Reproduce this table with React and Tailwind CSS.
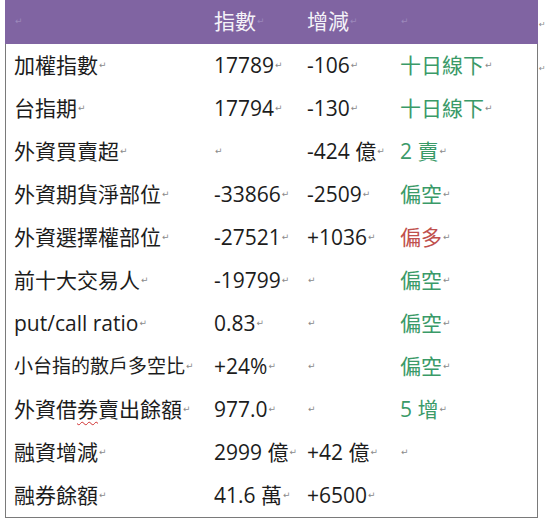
const font = { fontFamily: '"Open Sans", "Noto Sans CJK TC", sans-serif' };

const rows = [
  ["加權指數", "17789", "-106", "十日線下", "g"],
  ["台指期", "17794", "-130", "十日線下", "g"],
  ["外資買賣超", "", "-424 億", "2 賣", "g"],
  ["外資期貨淨部位", "-33866", "-2509", "偏空", "g"],
  ["外資選擇權部位", "-27521", "+1036", "偏多", "r"],
  ["前十大交易人", "-19799", "", "偏空", "g"],
  ["put/call ratio", "0.83", "", "偏空", "g"],
  ["小台指的散戶多空比", "+24%", "", "偏空", "g"],
  ["外資借券賣出餘額", "977.0", "", "5 增", "g"],
  ["融資增減", "2999 億", "+42 億", "", "g"],
  ["融券餘額", "41.6 萬", "+6500", null, "g"],
];

function Mark({ light, size = "text-[9px]" }) {
  return (
    <span
      className={`${size} ml-[1px] ${light ? "text-[#9c88bb]" : "text-[#8a8a8a]"}`}
      style={{ fontFamily: '"DejaVu Sans", sans-serif' }}
    >
      ↵
    </span>
  );
}

function Cell({ text, color, small }) {
  if (text === null) return <div />;
  return (
    <div className={`pl-2 flex items-center whitespace-nowrap ${color}`}>
      {text === "外資借券賣出餘額" ? (
        <span>
          外資借
          <span className="underline decoration-wavy decoration-[#d03030] decoration-1 underline-offset-4">券</span>
          賣出餘額
        </span>
      ) : (
        <span className={small ? "text-[19px]" : ""}>{text}</span>
      )}
      <Mark />
    </div>
  );
}

export default function App() {
  return (
    <div className="w-[546px] h-[523px] bg-white overflow-hidden text-[21px] text-[#1c1c1c]" style={font}>
      <div className="flex">
        <div className="ml-[5px] w-[533px] border-l border-r border-b border-[#7a7a7a]">
          <div className="grid grid-cols-[200px_93px_93px_145px] h-[44px] bg-[#8064a2] text-[#f4f2f8] -ml-px -mr-px w-[533px] pl-px">
            <div className="pl-2 flex items-center"><Mark light /></div>
            <div className="pl-2 flex items-center">指數<Mark light /></div>
            <div className="pl-2 flex items-center">增減<Mark light /></div>
            <div className="pl-2 flex items-center"><Mark light /></div>
          </div>
          {rows.map((r, i) => {
            const c = r[4] === "r" ? "text-[#c0504d]" : "text-[#3a9a68]";
            return (
              <div key={i} className="grid grid-cols-[200px_93px_93px_145px] h-[43px]">
                <Cell text={r[0]} small={i === 7} />
                <Cell text={r[1]} />
                <Cell text={r[2]} />
                <Cell text={r[3]} color={c} />
              </div>
            );
          })}
        </div>
        <div className="flex flex-col leading-none">
          <div className="h-[44px] pt-[9px]"><Mark size="text-[8px]" /></div>
          <div className="h-[43px] pt-[9px]"><Mark size="text-[8px]" /></div>
        </div>
      </div>
    </div>
  );
}
